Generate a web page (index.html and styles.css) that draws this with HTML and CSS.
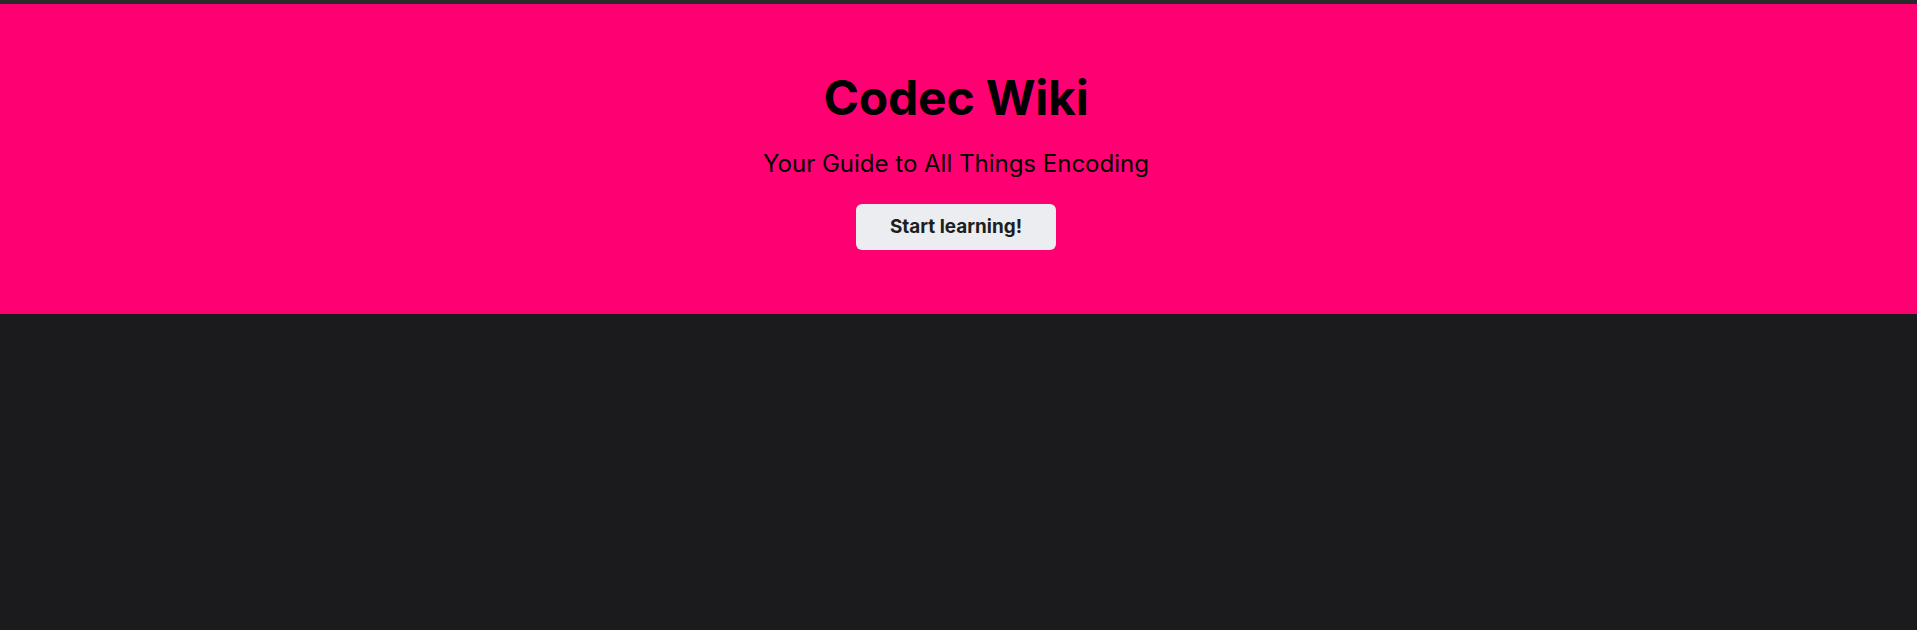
FILE: index.html
```html
<!DOCTYPE html>
<html lang="en">
<head>
<meta charset="utf-8">
<title>Codec Wiki</title>
<link rel="stylesheet" href="styles.css">
</head>
<body>
<div class="topbar"></div>
<header class="hero">
  <h1 class="hero-title">Codec Wiki</h1>
  <p class="hero-subtitle">Your Guide to All Things Encoding</p>
  <div class="buttons">
    <a class="button" href="#">Start learning!</a>
  </div>
</header>
<main class="main"></main>
</body>
</html>
```
FILE: styles.css
```css
html, body {
  margin: 0;
  padding: 0;
  height: 100%;
}
body {
  background: #1b1b1d;
  font-family: Inter, "Noto Sans", sans-serif;
  display: flex;
  flex-direction: column;
}
.topbar {
  height: 4px;
  background: #292b2b;
}
.hero {
  background: #ff0073;
  padding: 64px 5px 64px 0;
  display: flex;
  flex-direction: column;
  align-items: center;
  text-align: center;
  color: #000;
}
.hero-title {
  margin: 0 0 16px;
  font-size: 48px;
  line-height: 60px;
  font-weight: 700;
  letter-spacing: -0.2px;
}
.hero-subtitle {
  margin: 0 0 20px;
  font-size: 24px;
  line-height: 39.6px;
  font-weight: 400;
}
.buttons {
  display: flex;
  justify-content: center;
}
.button {
  display: flex;
  align-items: center;
  justify-content: center;
  box-sizing: border-box;
  width: 200px;
  height: 46px;
  background: #ebedf0;
  color: #1c1e21;
  border-radius: 6px;
  font-size: 18.9px;
  font-weight: 700;
  text-decoration: none;
}
.main {
  flex: 1;
}
```
